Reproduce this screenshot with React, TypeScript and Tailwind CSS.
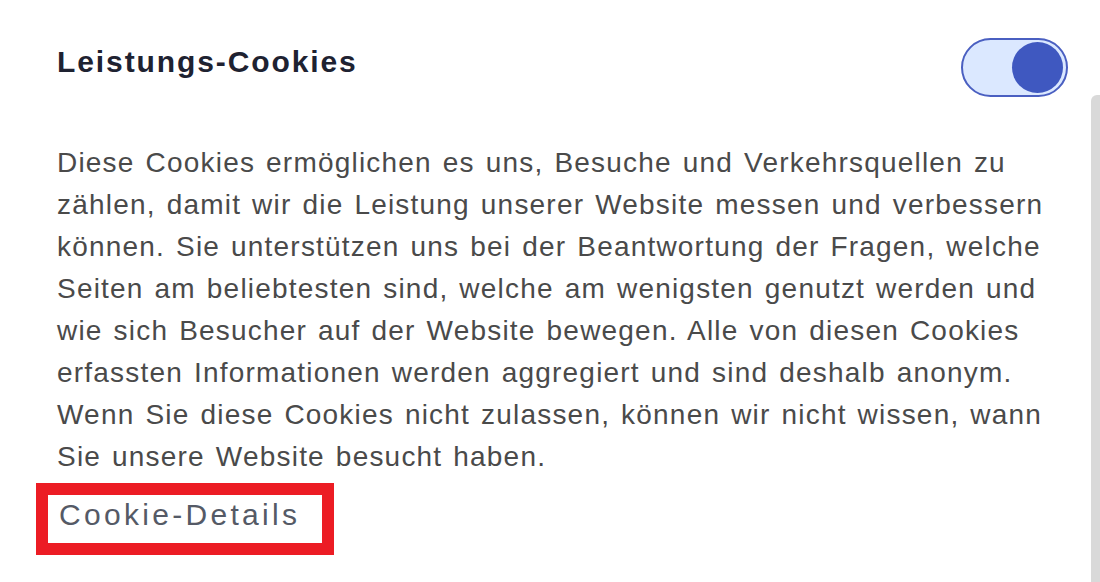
import React from "react";

export default function App() {
  return (
    <div className="relative w-[1100px] h-[582px] bg-white overflow-hidden" style={{ fontFamily: '"Liberation Sans", Arial, sans-serif' }}>
      <div className="absolute right-0 top-[95px] w-[9px] h-[500px] bg-[#d9d9d9] rounded-tl-[6px]" />
      <div className="pl-[57px] pr-[32px] pt-[40px]">
        <div className="flex items-start justify-between">
          <h2 className="text-[30px] font-bold text-[#1e2231] leading-[44px] tracking-[1.9px]">Leistungs-Cookies</h2>
          <div className="mt-[-2px] w-[107px] h-[59px] rounded-full border-[2px] border-[#4a5fc1] bg-[#dbe8ff] flex items-center justify-end pr-[3px]">
            <div className="w-[51px] h-[51px] rounded-full bg-[#3f58c0]" />
          </div>
        </div>
        <p className="mt-[45px] text-[28px] leading-[42px] text-[#4a4a4a] w-[1010px] tracking-[1.2px] [word-spacing:2px]">
          Diese Cookies ermöglichen es uns, Besuche und Verkehrsquellen zu zählen, damit wir die Leistung unserer Website messen und verbessern können. Sie unterstützen uns bei der Beantwortung der Fragen, welche Seiten am beliebtesten sind, welche am wenigsten genutzt werden und wie sich Besucher auf der Website bewegen. Alle von diesen Cookies erfassten Informationen werden aggregiert und sind deshalb anonym. Wenn Sie diese Cookies nicht zulassen, können wir nicht wissen, wann Sie unsere Website besucht haben.
        </p>
        <div className="mt-[5px] ml-[-21px] w-[298px] h-[72px] border-[12px] border-[#ec1c24] pl-[11px] pt-[2px]">
          <span className="block text-[30px] leading-[36px] text-[#555a66] tracking-[3.3px] whitespace-nowrap">Cookie-Details</span>
        </div>
      </div>
    </div>
  );
}
